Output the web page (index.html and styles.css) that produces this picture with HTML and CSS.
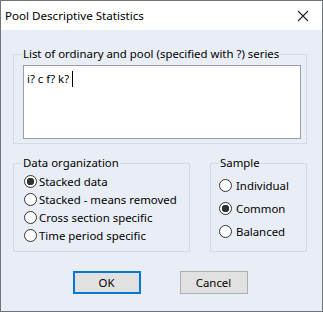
FILE: index.html
```html
<!DOCTYPE html>
<html lang="en">
<head>
    <meta charset="UTF-8">
    <title>Pool Descriptive Statistics</title>
    <link rel="stylesheet" href="styles.css">
</head>
<body>
    <div class="window">
        <div class="titlebar">
            <span class="title">Pool Descriptive Statistics</span>
            <svg class="close" width="12" height="12" viewBox="0 0 12 12">
                <path d="M1 1 L11 11 M11 1 L1 11" stroke="#222" stroke-width="1.1" fill="none"/>
            </svg>
        </div>
        <div class="content">
            <fieldset class="group series">
                <legend>List of ordinary and pool (specified with ?) series</legend>
                <div class="editbox">i? c f? k? <span class="caret"></span></div>
            </fieldset>

            <div class="options">
                <fieldset class="group organization">
                    <legend>Data organization</legend>
                    <label class="radio"><input type="radio" name="org" checked> Stacked data</label>
                    <label class="radio"><input type="radio" name="org"> Stacked - means removed</label>
                    <label class="radio"><input type="radio" name="org"> Cross section specific</label>
                    <label class="radio"><input type="radio" name="org"> Time period specific</label>
                </fieldset>
                <fieldset class="group sample">
                    <legend>Sample</legend>
                    <label class="radio"><input type="radio" name="smp"> Individual</label>
                    <label class="radio"><input type="radio" name="smp" checked> Common</label>
                    <label class="radio"><input type="radio" name="smp"> Balanced</label>
                </fieldset>
            </div>

            <div class="buttons">
                <button class="btn default">OK</button>
                <button class="btn">Cancel</button>
            </div>
        </div>
    </div>
</body>
</html>
```

FILE: styles.css
```css
body {
    margin: 0;
    font-family: "Noto Sans", "DejaVu Sans", sans-serif;
    font-size: 11.4px;
    color: #000;
}
.window {
    width: 323px;
    height: 312px;
    box-sizing: border-box;
    border: 1px solid #6f747a;
    display: flex;
    flex-direction: column;
    background-color: #e9eef6;
}
.titlebar {
    height: 29px;
    background-color: #fff;
    display: flex;
    align-items: center;
    justify-content: space-between;
    padding: 0 13px 0 4px;
    flex-shrink: 0;
}
.title {
    font-size: 11.6px;
    line-height: 16px;
}
.close {
    display: block;
}
.content {
    flex: 1;
    display: flex;
    flex-direction: column;
    padding: 16px 15px 0 12px;
}
.group {
    margin: 0;
    border: 1px solid #d4dae3;
    min-width: 0;
}
.group legend {
    padding: 0 1px;
    line-height: 16px;
}
.series {
    padding: 3px 5px 4px 9px;
}
.series legend {
    margin-left: -1px;
}
.editbox {
    height: 67px;
    background-color: #fff;
    border: 1px solid #9b9fa5;
    padding: 5px 3px 0 3px;
    line-height: 16px;
}
.caret {
    display: inline-block;
    width: 1px;
    height: 16px;
    background-color: #000;
    vertical-align: top;
}
.options {
    display: flex;
    gap: 20px;
    margin-top: 11px;
}
.organization {
    width: 177px;
    box-sizing: border-box;
    padding: 1px 4px 6px 10px;
}
.organization legend {
    margin-left: -2px;
}
.sample {
    flex: 1;
    padding: 3px 4px 8px 8px;
}
.radio {
    display: flex;
    align-items: center;
    height: 18px;
    gap: 2px;
}
.sample .radio {
    height: 23px;
    gap: 4px;
}
.radio input {
    appearance: none;
    margin: 0;
    width: 13px;
    height: 13px;
    border: 1px solid #333;
    border-radius: 50%;
    background-color: #fff;
    flex-shrink: 0;
}
.radio input:checked {
    background: radial-gradient(circle, #333 0 3.5px, #fff 4px);
}
.buttons {
    display: flex;
    justify-content: center;
    gap: 39px;
    margin-top: 19px;
}
.btn {
    width: 68px;
    height: 23px;
    font-family: inherit;
    font-size: 11.4px;
    background-color: #e1e1e1;
    border: 1px solid #adadad;
    padding: 0;
}
.btn.default {
    border: 2px solid #0078d7;
}
```
